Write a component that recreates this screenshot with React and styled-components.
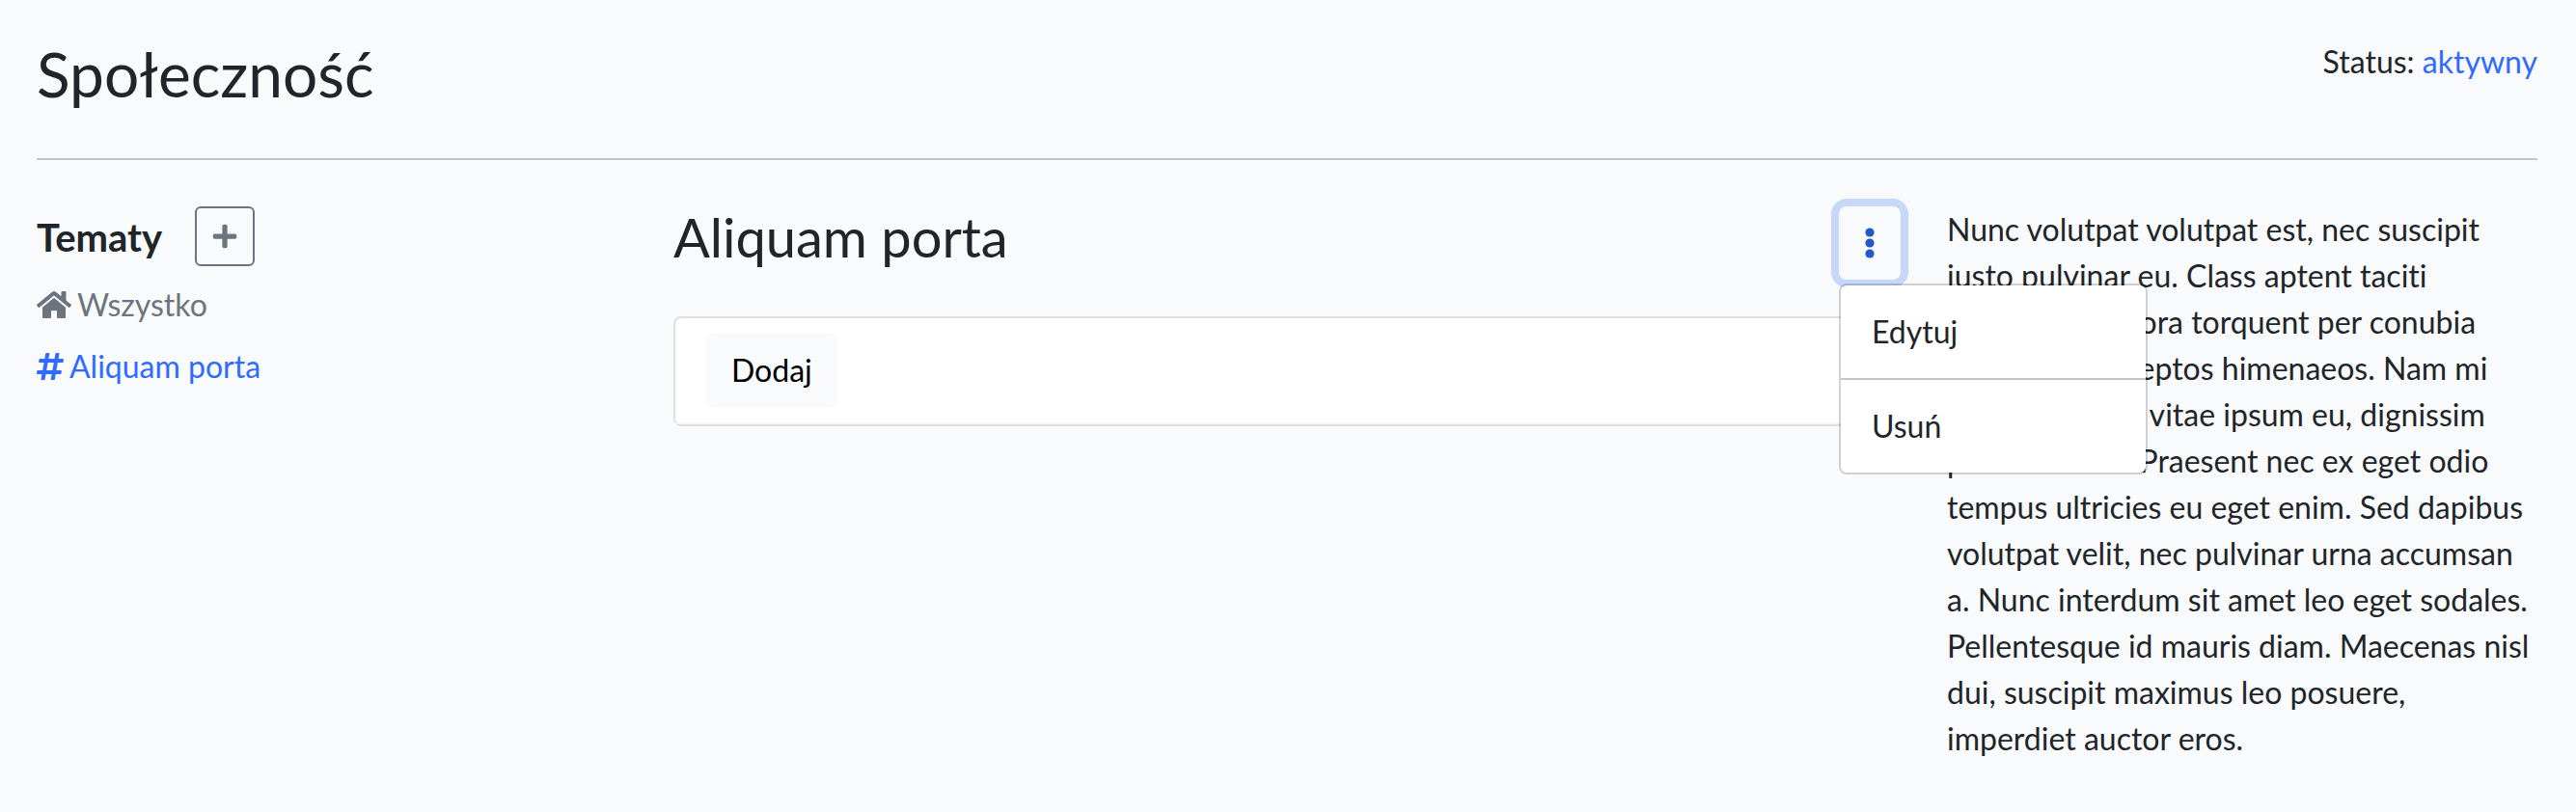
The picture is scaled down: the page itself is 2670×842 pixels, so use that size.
import React from 'react';
import styled, { createGlobalStyle } from 'styled-components';
import { FaHome, FaHashtag, FaPlus } from 'react-icons/fa';

const GlobalStyle = createGlobalStyle`
  *, *::before, *::after { box-sizing: border-box; }
  body {
    margin: 0;
    background: #f8fafc;
    color: #212529;
    font-family: Lato, "Liberation Sans", sans-serif;
    font-size: 32px;
    line-height: 48px;
    font-variant-ligatures: none;
  }
  h1, h2, h3, p, ul { margin: 0; padding: 0; }
  ul { list-style: none; }
  button { font: inherit; cursor: pointer; }
`;

const Page = styled.main`
  padding: 40px 40px 0 38px;
`;

const Header = styled.header`
  display: flex;
  justify-content: space-between;
  align-items: flex-start;
  padding-bottom: 50px;
  border-bottom: 2px solid #c3c4c6;
`;

const PageTitle = styled.h1`
  font-size: 64px;
  font-weight: 400;
  line-height: 74px;
`;

const Link = styled.a`
  color: ${(p) => (p.$muted ? '#6c757d' : '#2f6bff')};
  text-decoration: none;
`;

const Row = styled.div`
  display: flex;
  margin: 48px -24px 0;
`;

const Column = styled.div`
  flex: 0 0 ${(p) => p.$width};
  min-width: 0;
  padding: 0 24px;
`;

const TopicsHeader = styled.div`
  display: flex;
  align-items: flex-start;
  gap: 34px;
  margin-bottom: 14px;
`;

const TopicsTitle = styled.h3`
  font-size: 40px;
  font-weight: 700;
  line-height: 64px;
`;

const AddTopicButton = styled.button`
  display: flex;
  align-items: center;
  justify-content: center;
  width: 62px;
  height: 62px;
  padding: 0;
  border: 2px solid #6c757d;
  border-radius: 6px;
  background: transparent;
  color: #6c757d;
`;

const TopicList = styled.ul`
  display: grid;
  gap: 16px;
`;

const TopicLink = styled(Link)`
  display: flex;
  align-items: center;
  gap: 6px;

  svg {
    width: ${(p) => p.$iconWidth};
    height: 32px;
  }
`;

const SectionHeader = styled.div`
  display: flex;
  justify-content: space-between;
  align-items: flex-start;
  margin-bottom: 38px;
`;

const SectionTitle = styled.h2`
  font-size: 56px;
  font-weight: 400;
  line-height: 64px;
`;

const Dropdown = styled.div`
  position: relative;
`;

const MenuToggle = styled.button`
  display: flex;
  align-items: center;
  justify-content: center;
  width: 64px;
  height: 76px;
  padding: 0;
  border: 0;
  border-radius: 8px;
  background: transparent;
  color: #2458c8;
  box-shadow: 0 0 0 8px #c6d7f9;
`;

const Menu = styled.ul`
  position: absolute;
  z-index: 1;
  top: calc(100% + 4px);
  left: 0;
  width: 320px;
  border: 2px solid rgba(0, 0, 0, 0.17);
  border-radius: 8px;
  background: #fff;
  background-clip: padding-box;
`;

const MenuEntry = styled.li`
  & + & { border-top: 2px solid #c4c5c6; }
`;

const MenuItem = styled.button`
  display: block;
  width: 100%;
  padding: 24px 32px;
  border: 0;
  background: transparent;
  color: #212529;
  text-align: left;
`;

const Card = styled.section`
  border: 2px solid #dddfe1;
  border-radius: 8px;
  background: #fff;
`;

const CardHeader = styled.div`
  padding: 16px 32px;
  border-bottom: 2px solid #f5f5f5;
`;

const LightButton = styled.button`
  display: block;
  padding: 12px 24px;
  border: 2px solid #f8fafc;
  border-radius: 8px;
  background: #f8fafc;
  color: #000;
`;

function DotsIcon() {
  return (
    <svg width="12" height="32" viewBox="0 0 12 32" fill="currentColor" aria-hidden="true">
      <circle cx="6" cy="5" r="4.6" />
      <circle cx="6" cy="16" r="4.6" />
      <circle cx="6" cy="27" r="4.6" />
    </svg>
  );
}

export default function App() {
  return (
    <>
      <GlobalStyle />
      <Page>
        <Header>
          <PageTitle>Społeczność</PageTitle>
          <p>
            Status: <Link href="#status">aktywny</Link>
          </p>
        </Header>
        <Row>
          <Column as="nav" $width="25%">
            <TopicsHeader>
              <TopicsTitle>Tematy</TopicsTitle>
              <AddTopicButton type="button" aria-label="Dodaj temat">
                <FaPlus size={28} />
              </AddTopicButton>
            </TopicsHeader>
            <TopicList>
              <li>
                <TopicLink href="#all" $muted $iconWidth="36px">
                  <FaHome />
                  Wszystko
                </TopicLink>
              </li>
              <li>
                <TopicLink href="#aliquam-porta" $iconWidth="28px">
                  <FaHashtag />
                  Aliquam porta
                </TopicLink>
              </li>
            </TopicList>
          </Column>
          <Column $width="50%">
            <SectionHeader>
              <SectionTitle>Aliquam porta</SectionTitle>
              <Dropdown>
                <MenuToggle type="button" aria-label="Opcje" aria-expanded="true">
                  <DotsIcon />
                </MenuToggle>
                <Menu>
                  <MenuEntry>
                    <MenuItem type="button">Edytuj</MenuItem>
                  </MenuEntry>
                  <MenuEntry>
                    <MenuItem type="button">Usuń</MenuItem>
                  </MenuEntry>
                </Menu>
              </Dropdown>
            </SectionHeader>
            <Card>
              <CardHeader>
                <LightButton type="button">Dodaj</LightButton>
              </CardHeader>
            </Card>
          </Column>
          <Column as="aside" $width="25%">
            <p>
              Nunc volutpat volutpat est, nec suscipit justo pulvinar eu. Class
              aptent taciti sociosqu ad litora torquent per conubia nostra, per
              inceptos himenaeos. Nam mi augue, gravida vitae ipsum eu, dignissim
              porttitor felis. Praesent nec ex eget odio tempus ultricies eu eget
              enim. Sed dapibus volutpat velit, nec pulvinar urna accumsan a.
              Nunc interdum sit amet leo eget sodales. Pellentesque id mauris
              diam. Maecenas nisl dui, suscipit maximus leo posuere, imperdiet
              auctor eros.
            </p>
          </Column>
        </Row>
      </Page>
    </>
  );
}
